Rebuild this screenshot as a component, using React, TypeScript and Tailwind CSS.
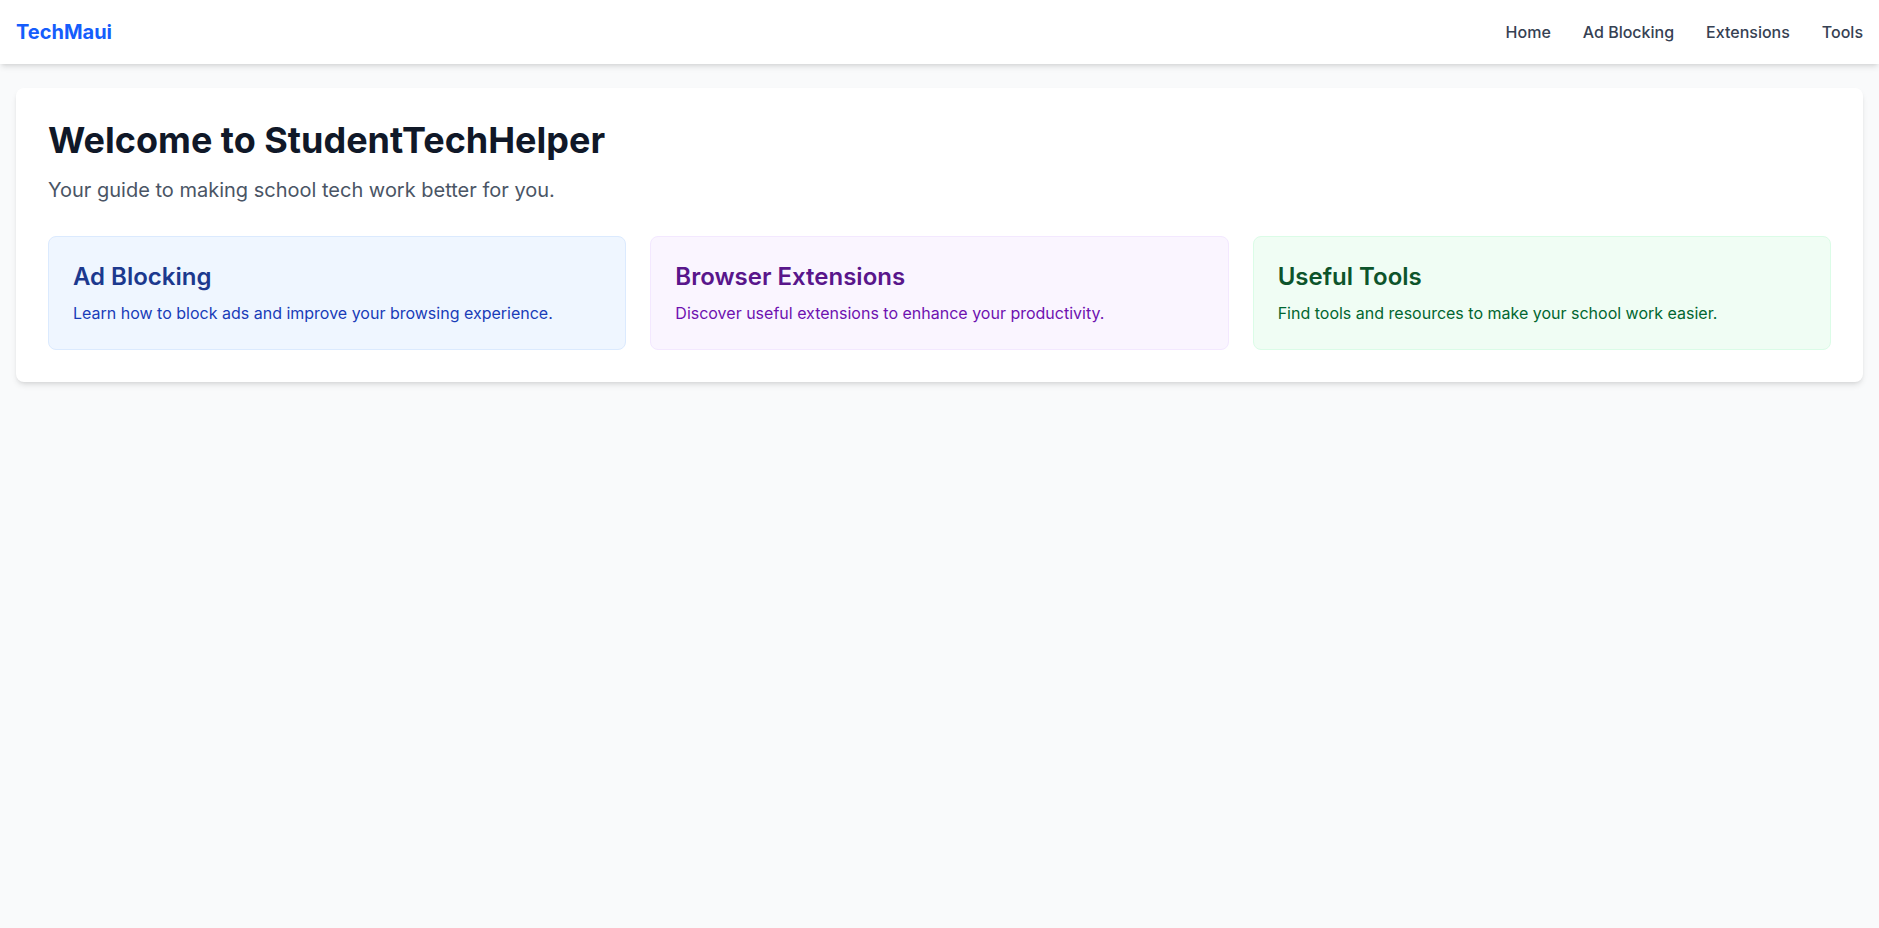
const cards = [
  {
    title: "Ad Blocking",
    text: "Learn how to block ads and improve your browsing experience.",
    box: "bg-blue-50 border-blue-100",
    head: "text-blue-900",
    body: "text-blue-800",
  },
  {
    title: "Browser Extensions",
    text: "Discover useful extensions to enhance your productivity.",
    box: "bg-purple-50 border-purple-100",
    head: "text-purple-900",
    body: "text-purple-800",
  },
  {
    title: "Useful Tools",
    text: "Find tools and resources to make your school work easier.",
    box: "bg-green-50 border-green-100",
    head: "text-green-900",
    body: "text-green-800",
  },
];

const App = () => (
  <div className="min-h-screen bg-gray-50 font-['Inter',sans-serif]">
    {/* Navbar */}
    <nav className="bg-white shadow-md">
      <div className="h-16 px-4 flex items-center justify-between">
        <a href="#" className="text-xl font-bold text-blue-600">TechMaui</a>
        <div className="flex space-x-8 font-medium text-gray-700">
          <a href="#" className="hover:text-blue-600">Home</a>
          <a href="#" className="hover:text-blue-600">Ad Blocking</a>
          <a href="#" className="hover:text-blue-600">Extensions</a>
          <a href="#" className="hover:text-blue-600">Tools</a>
        </div>
      </div>
    </nav>

    {/* Main */}
    <main className="p-4 pt-6">
      <div className="bg-white rounded-lg shadow-md p-8">
        <h1 className="text-4xl font-bold text-gray-900 mb-4">Welcome to StudentTechHelper</h1>
        <p className="text-xl text-gray-600 mb-8">Your guide to making school tech work better for you.</p>
        <div className="grid grid-cols-3 gap-6">
          {cards.map((c) => (
            <div key={c.title} className={`p-6 rounded-lg border ${c.box}`}>
              <h2 className={`text-2xl font-semibold mb-2 ${c.head}`}>{c.title}</h2>
              <p className={c.body}>{c.text}</p>
            </div>
          ))}
        </div>
      </div>
    </main>
  </div>
);

export default App;
